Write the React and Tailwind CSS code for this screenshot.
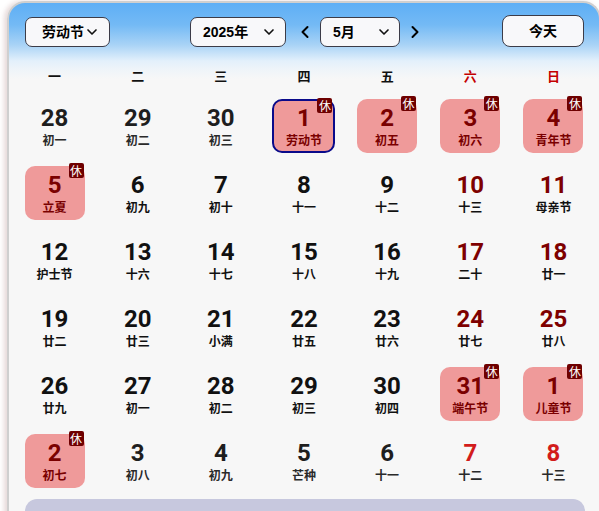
import React from 'react';
import { ChevronDown, ChevronLeft, ChevronRight } from 'lucide-react';

const weekdays = ['一', '二', '三', '四', '五', '六', '日'];

// o: 非本月, h: 休, t: 今天
const days = [
  { d: 28, l: '初一', o: true }, { d: 29, l: '初二', o: true }, { d: 30, l: '初三', o: true },
  { d: 1, l: '劳动节', h: true, t: true }, { d: 2, l: '初五', h: true }, { d: 3, l: '初六', h: true }, { d: 4, l: '青年节', h: true },
  { d: 5, l: '立夏', h: true }, { d: 6, l: '初九' }, { d: 7, l: '初十' }, { d: 8, l: '十一' }, { d: 9, l: '十二' }, { d: 10, l: '十三' }, { d: 11, l: '母亲节' },
  { d: 12, l: '护士节' }, { d: 13, l: '十六' }, { d: 14, l: '十七' }, { d: 15, l: '十八' }, { d: 16, l: '十九' }, { d: 17, l: '二十' }, { d: 18, l: '廿一' },
  { d: 19, l: '廿二' }, { d: 20, l: '廿三' }, { d: 21, l: '小满' }, { d: 22, l: '廿五' }, { d: 23, l: '廿六' }, { d: 24, l: '廿七' }, { d: 25, l: '廿八' },
  { d: 26, l: '廿九' }, { d: 27, l: '初一' }, { d: 28, l: '初二' }, { d: 29, l: '初三' }, { d: 30, l: '初四' }, { d: 31, l: '端午节', h: true }, { d: 1, l: '儿童节', h: true, o: true },
  { d: 2, l: '初七', h: true, o: true }, { d: 3, l: '初八', o: true }, { d: 4, l: '初九', o: true }, { d: 5, l: '芒种', o: true }, { d: 6, l: '十一', o: true }, { d: 7, l: '十二', o: true }, { d: 8, l: '十三', o: true },
];

function DayCell({ day, col }) {
  const weekend = col >= 5;
  let numColor = day.o ? 'text-[#1e1e1e]' : 'text-[#111]';
  if (weekend) numColor = day.o ? 'text-[#d21c1c]' : 'text-[#7e0000]';
  if (day.h) numColor = 'text-[#7a0000]';
  const lunarColor = day.h ? 'text-[#7a0000]' : day.o ? 'text-[#2a2a2a]' : 'text-[#111]';

  let box = 'w-[60px]';
  if (day.h) box = 'w-[60px] bg-[#ef9a9a] rounded-[10px]';
  if (day.t) box = 'w-[63px] bg-[#ef9a9a] rounded-[10px] border-2 border-[#0a0a8a]';

  return (
    <div className="h-[67px] flex items-center justify-center">
      <div className={`relative h-[54px] flex flex-col items-center justify-center ${box}`}>
        <div className={`font-['Roboto','Noto_Sans_CJK_SC',sans-serif] font-bold text-[24px] leading-[24px] ${numColor}`}>
          {day.d}
        </div>
        <div className={`mt-[3px] font-['Noto_Sans_CJK_SC',sans-serif] font-bold text-[12px] leading-[13px] ${lunarColor}`}>
          {day.l}
        </div>
        {day.h && (
          <span className="absolute -top-[3px] right-[1px] w-[15px] h-[15px] rounded-[2px] bg-[#6e0000] text-white text-[12px] leading-[15px] text-center font-['Noto_Sans_CJK_SC',sans-serif]">
            休
          </span>
        )}
      </div>
    </div>
  );
}

function Select({ label, width, padL, padR }) {
  return (
    <div
      className={`h-[30px] flex items-center justify-between bg-[#f8f8fa] border border-[#3c3c48] rounded-[7px] ${width} ${padL} ${padR}`}
    >
      <span className="font-['Liberation_Sans','Noto_Sans_CJK_SC',sans-serif] font-bold text-[14px] text-black">{label}</span>
      <ChevronDown size={16} strokeWidth={2.5} className="text-[#111]" />
    </div>
  );
}

export default function App() {
  return (
    <div className="min-h-screen bg-white pl-[7px] pt-[1px] overflow-hidden">
      <div className="w-[594px] rounded-t-[18px] border-2 border-b-0 border-[#cfcfcf] shadow-[-3px_0_5px_rgba(200,170,170,0.45)] bg-[linear-gradient(180deg,#5eaff5_0px,#74baf5_22px,#a9d3f6_42px,#e3f0fb_58px,#eef4f9_66px,#f7f7f7_76px)] overflow-hidden">
        {/* 顶部工具栏 */}
        <div className="flex items-center pl-[16px] pr-[15px] pt-[14px]">
          <Select label="劳动节" width="w-[85px]" padL="pl-[16px]" padR="pr-[9px]" />
          <div className="ml-[80px]">
            <Select label="2025年" width="w-[96px]" padL="pl-[12px]" padR="pr-[8px]" />
          </div>
          <ChevronLeft size={20} strokeWidth={2.4} className="ml-[9px] text-black" />
          <div className="ml-[5px]">
            <Select label="5月" width="w-[80px]" padL="pl-[12px]" padR="pr-[7px]" />
          </div>
          <ChevronRight size={20} strokeWidth={2.4} className="ml-[5px] text-black" />
          <button className="ml-auto w-[82px] h-[32px] -mt-[2px] bg-[#f8f8fa] border border-[#3c3c48] rounded-[8px] font-['Liberation_Sans','Noto_Sans_CJK_SC',sans-serif] font-bold text-[14px] text-black">
            今天
          </button>
        </div>

        <div className="pl-[4px] pr-[2px]">
          {/* 星期 */}
          <div className="grid grid-cols-7 w-[582px] h-[32px] mt-[13px]">
            {weekdays.map((w, i) => (
              <div
                key={w}
                className={`flex items-center justify-center font-['Noto_Sans_CJK_SC',sans-serif] font-bold text-[13px] ${
                  i >= 5 ? 'text-[#c40000]' : 'text-[#111]'
                }`}
              >
                {w}
              </div>
            ))}
          </div>

          {/* 日期 */}
          <div className="grid grid-cols-7 w-[582px]">
            {days.map((day, i) => (
              <DayCell key={i} day={day} col={i % 7} />
            ))}
          </div>

          <div className="ml-[12px] mt-[5px] w-[560px] h-[60px] rounded-[12px] bg-[#c7c8de]" />
        </div>
      </div>
    </div>
  );
}
